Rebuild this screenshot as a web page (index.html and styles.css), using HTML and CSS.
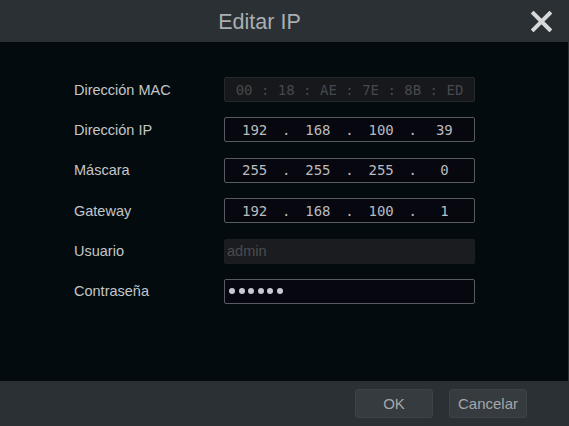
FILE: index.html
```html
<!DOCTYPE html>
<html>
<head>
<meta charset="utf-8">
<link rel="stylesheet" href="styles.css">
</head>
<body>
<div class="dialog">
  <header class="head">
    <h1 class="title">Editar IP</h1>
    <button class="close" aria-label="Cerrar">
      <svg width="21" height="21" viewBox="0 0 21 21"><path d="M2.5 2.5 L18.5 18.5 M18.5 2.5 L2.5 18.5" stroke="#d6d8da" stroke-width="4" stroke-linecap="square"/></svg>
    </button>
  </header>
  <main class="body">
    <div class="form">
      <div class="row">
        <span class="label">Dirección MAC</span>
        <div class="box mac">
          <span>00</span><span class="sep">:</span><span>18</span><span class="sep">:</span><span>AE</span><span class="sep">:</span><span>7E</span><span class="sep">:</span><span>8B</span><span class="sep">:</span><span>ED</span>
        </div>
      </div>
      <div class="row">
        <span class="label">Dirección IP</span>
        <div class="box ip">
          <span>192</span><span class="sep">.</span><span>168</span><span class="sep">.</span><span>100</span><span class="sep">.</span><span>39</span>
        </div>
      </div>
      <div class="row">
        <span class="label">Máscara</span>
        <div class="box ip">
          <span>255</span><span class="sep">.</span><span>255</span><span class="sep">.</span><span>255</span><span class="sep">.</span><span>0</span>
        </div>
      </div>
      <div class="row">
        <span class="label">Gateway</span>
        <div class="box ip">
          <span>192</span><span class="sep">.</span><span>168</span><span class="sep">.</span><span>100</span><span class="sep">.</span><span>1</span>
        </div>
      </div>
      <div class="row">
        <span class="label">Usuario</span>
        <div class="box text disabled">admin</div>
      </div>
      <div class="row">
        <span class="label">Contraseña</span>
        <div class="box pass">
          <i class="dot"></i><i class="dot"></i><i class="dot"></i><i class="dot"></i><i class="dot"></i><i class="dot"></i>
        </div>
      </div>
    </div>
  </main>
  <footer class="foot">
    <button class="btn">OK</button>
    <button class="btn">Cancelar</button>
  </footer>
</div>
</body>
</html>
```

FILE: styles.css
```css
* { box-sizing: border-box; }
html, body { margin: 0; padding: 0; }
body {
  width: 569px;
  height: 426px;
  background: #2b3034;
  font-family: "Liberation Sans", Arial, sans-serif;
  overflow: hidden;
}
.dialog {
  width: 569px;
  height: 426px;
  display: flex;
  flex-direction: column;
}
.head {
  height: 42px;
  background: #2b3034;
  display: flex;
  align-items: center;
  justify-content: center;
  padding-right: 50px;
  position: relative;
}
.title {
  margin: 0;
  font-weight: normal;
  font-size: 21.5px;
  color: #a9aeb2;
  letter-spacing: 0;
  transform: translateY(1px);
}
.close {
  position: absolute;
  right: 17px;
  top: 11px;
  width: 21px;
  height: 21px;
  padding: 0;
  border: 0;
  background: none;
  display: flex;
}
.body {
  height: 339px;
  background: #030b0f;
  border-right: 1px solid #2b3034;
  padding: 35px 0 0 74px;
}
.form {
  display: flex;
  flex-direction: column;
  gap: 15.4px;
}
.row {
  display: flex;
  align-items: center;
  height: 25px;
}
.label {
  width: 150px;
  font-size: 14.5px;
  color: #c4c6c8;
}
.box {
  width: 251px;
  height: 25px;
  border: 1px solid #575b62;
  background: #07070f;
  border-radius: 2px;
  font-family: "DejaVu Sans Mono", monospace;
  font-size: 14px;
  color: #b9bbbe;
}
.ip {
  display: grid;
  grid-template-columns: 1fr 16px 1fr 16px 1fr 16px 1fr;
  padding: 0 6px;
  align-items: center;
  text-align: center;
}
.mac {
  display: grid;
  grid-template-columns: 1fr 12px 1fr 12px 1fr 12px 1fr 12px 1fr 12px 1fr;
  padding: 0 4px 0 4px;
  align-items: center;
  text-align: center;
  background: #17181b;
  border-color: #26282b;
  color: #46494d;
}
.sep { text-align: center; }
.text {
  display: flex;
  align-items: center;
  padding-left: 2px;
  font-family: "Liberation Sans", Arial, sans-serif;
  font-size: 14.5px;
}
.disabled {
  background: #1b1c1f;
  border-color: #1d1e21;
  color: #4a4c50;
}
.pass {
  display: flex;
  align-items: center;
  gap: 3.5px;
  padding-left: 4px;
}
.dot {
  width: 6px;
  height: 6px;
  border-radius: 50%;
  background: #c9c9d2;
}
.foot {
  flex: 1;
  background: #2b3034;
  display: flex;
  justify-content: flex-end;
  align-items: flex-start;
  gap: 16px;
  padding: 8px 42px 0 0;
}
.btn {
  width: 78px;
  height: 29px;
  background: #363b3f;
  border: 1px solid #3d4246;
  border-radius: 3px;
  color: #a3a7ab;
  font-family: "Liberation Sans", Arial, sans-serif;
  font-size: 15px;
  padding: 0;
}
```
